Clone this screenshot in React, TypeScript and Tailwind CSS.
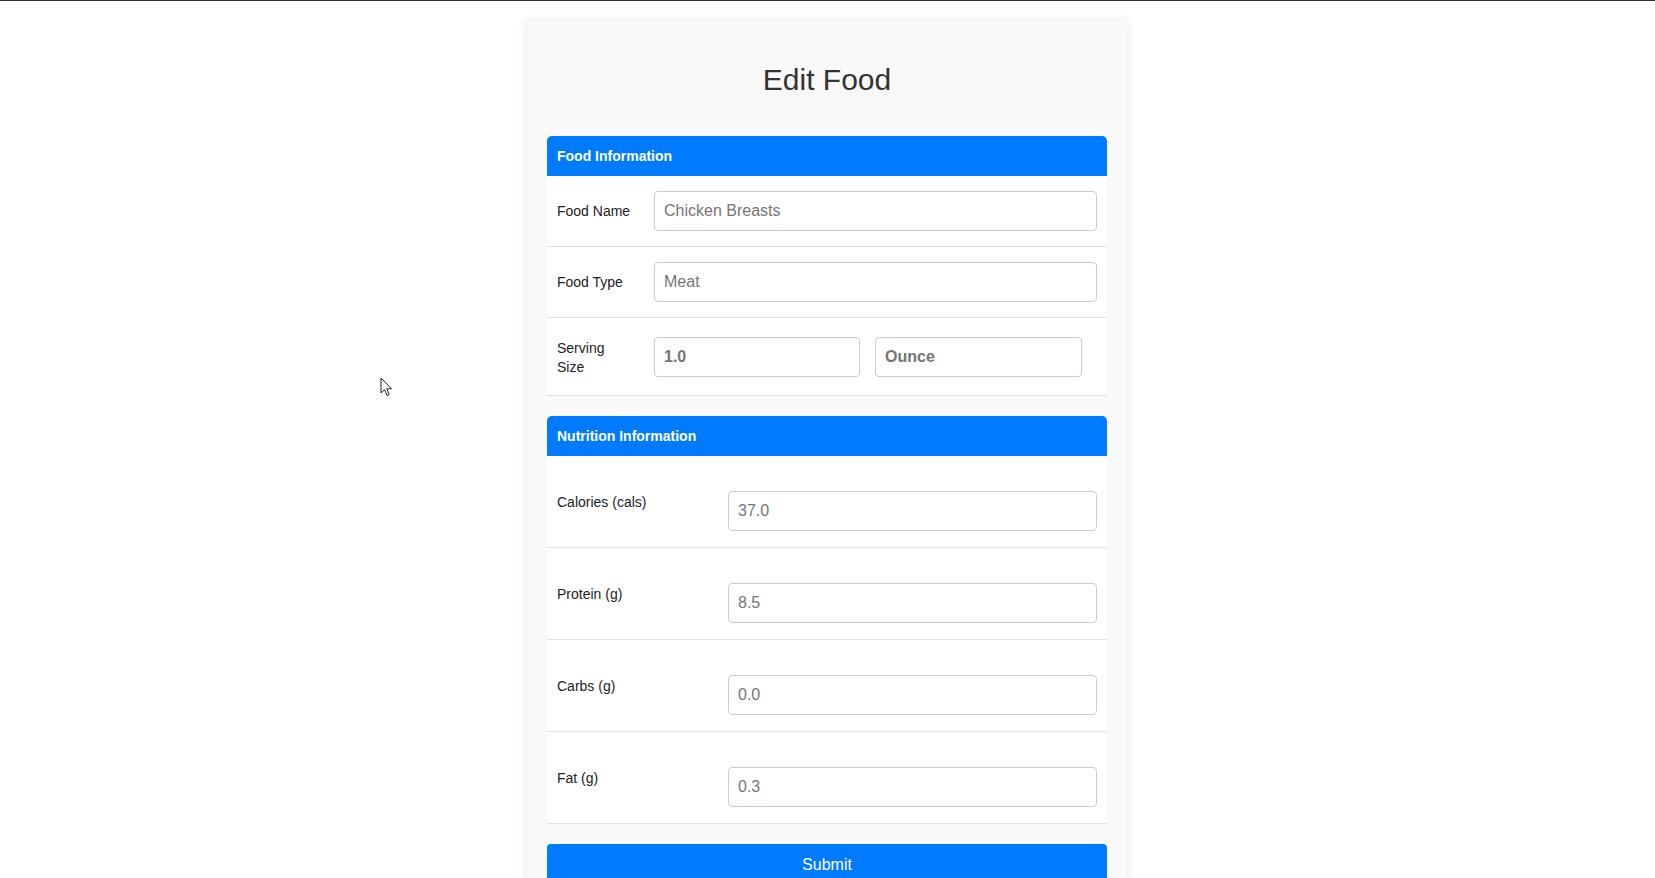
import React from 'react';

const font = { fontFamily: '"Liberation Sans", Arial, sans-serif' };

const inputCls =
  'h-[40px] rounded-[4px] border border-[#cccccc] bg-white px-[9px] text-[16px] text-[#333] placeholder-[#757575] focus:outline-none';

const Cursor: React.FC = () => (
  <svg className="absolute left-[380px] top-[376px]" width="13" height="21" viewBox="0 0 13 21" fill="none">
    <path d="M1 1 L1 16 L4.5 12.5 L7 18.5 L9.2 17.6 L6.8 11.8 L11.5 11.8 Z" fill="#fff" stroke="#222" strokeWidth="1" strokeLinejoin="round" />
  </svg>
);

const SectionHeader: React.FC<{ title: string }> = ({ title }) => (
  <div className="flex h-[40px] items-center rounded-t-[5px] bg-[#007bff] pl-[10px] text-[14px] font-bold text-white">
    {title}
  </div>
);

const InfoRow: React.FC<{ label: string; placeholder: string }> = ({ label, placeholder }) => (
  <div className="flex h-[71px] items-center border-b border-[#dddddd]">
    <div className="w-[97px] shrink-0 pl-[10px] pr-[10px] text-[14px] text-[#222]">{label}</div>
    <div className="flex-1 pl-[10px] pr-[10px]">
      <input type="text" placeholder={placeholder} className={`${inputCls} w-full`} />
    </div>
  </div>
);

const NutritionRow: React.FC<{ label: string; placeholder: string }> = ({ label, placeholder }) => (
  <div className="flex h-[92px] items-start border-b border-[#dddddd] pt-[35px]">
    <div className="w-[171px] shrink-0 pl-[10px] pt-[2px] text-[14px] leading-[19px] text-[#222]">{label}</div>
    <div className="flex-1 pl-[10px] pr-[10px]">
      <input type="text" placeholder={placeholder} className={`${inputCls} w-full`} />
    </div>
  </div>
);

export default function App() {
  const nutrition = [
    { label: 'Calories (cals)', value: '37.0' },
    { label: 'Protein (g)', value: '8.5' },
    { label: 'Carbs (g)', value: '0.0' },
    { label: 'Fat (g)', value: '0.3' },
  ];

  return (
    <div className="relative h-[878px] overflow-hidden border-t border-[#333] bg-white" style={font}>
      <Cursor />
      <div className="ml-[527px] mt-[20px] w-[600px] bg-[#f9f9f9] px-[20px] pt-[20px] pb-[40px] shadow-[0_0_10px_rgba(0,0,0,0.1)]">
        <h1 className="mt-[22px] mb-[39px] text-center text-[30px] leading-[34px] font-normal text-[#333]">Edit Food</h1>

        <form onSubmit={(e) => e.preventDefault()}>
          <div className="mb-[20px]">
            <SectionHeader title="Food Information" />
            <div className="bg-white">
              <InfoRow label="Food Name" placeholder="Chicken Breasts" />
              <InfoRow label="Food Type" placeholder="Meat" />
              <div className="flex h-[78px] items-center border-b border-[#dddddd]">
                <div className="w-[97px] shrink-0 pl-[10px] pr-[10px] pt-[2px] text-[14px] leading-[19px] text-[#222]">Serving Size</div>
                <div className="flex items-center gap-[15px] pl-[10px]">
                  <input type="text" placeholder="1.0" className={`${inputCls} w-[206px] font-bold placeholder-[#6f6f6f]`} />
                  <input type="text" placeholder="Ounce" className={`${inputCls} w-[207px] font-bold placeholder-[#6f6f6f]`} />
                </div>
              </div>
            </div>
          </div>

          <div className="mb-[20px]">
            <SectionHeader title="Nutrition Information" />
            <div className="bg-white">
              {nutrition.map((n) => (
                <NutritionRow key={n.label} label={n.label} placeholder={n.value} />
              ))}
            </div>
          </div>

          <button type="submit" className="h-[42px] w-full rounded-[4px] bg-[#007bff] text-[16px] text-white">
            Submit
          </button>
        </form>
      </div>
    </div>
  );
}
